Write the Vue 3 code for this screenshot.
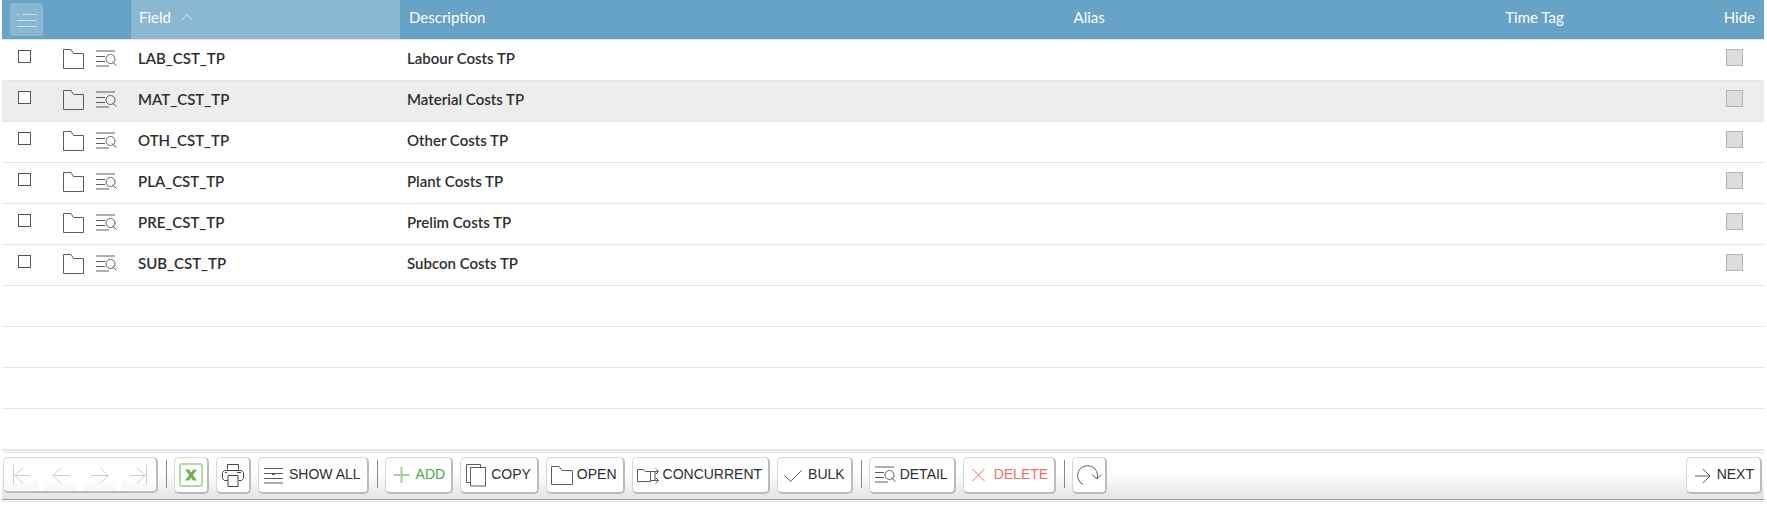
<script setup>
import { ref, reactive } from 'vue'

const rows = reactive([
  { field: 'LAB_CST_TP', description: 'Labour Costs TP', selected: false },
  { field: 'MAT_CST_TP', description: 'Material Costs TP', selected: false },
  { field: 'OTH_CST_TP', description: 'Other Costs TP', selected: false },
  { field: 'PLA_CST_TP', description: 'Plant Costs TP', selected: false },
  { field: 'PRE_CST_TP', description: 'Prelim Costs TP', selected: false },
  { field: 'SUB_CST_TP', description: 'Subcon Costs TP', selected: false },
])
const emptyRows = 4
const activeRow = ref(1)

// Icons are drawn on a 24 x 24 grid, one unit per pixel.
const icons = {
  folder: 'M1.5 21.5V2.5H9L11.5 6.5H21.5V21.5Z',
  detail: 'M1 4H20M1 9.5H10M1 14.5H10M1 19H14M17.5 15L21.5 18.5M15.5 7.5a4.5 4.5 0 1 0 .01 0Z',
  showAll: 'M1 5.5H20M1 10.5H20M1 15.5H20M1 20H20M9 11.5H12',
  add: 'M11.5 4V20M3.5 12H19.5',
  copy: 'M5.5 19.5H1.5V1.5H15.5V4.5M5.5 4.5H20.5V23H5.5Z',
  open: 'M.5 21.5V3.5H8L11 7.5H21.5V21.5Z',
  concurrent: 'M14 18.5H.5V6.5H6.5L8.5 8.5H14M13.5 8V19M14 8.5H21M14 17.5H21M18.5 5.5L21.5 8.5L18.5 11.5M18.5 14.5L21.5 17.5L18.5 20.5M18 8.5V17.5',
  bulk: 'M2.5 12.5L8.5 18.5L19.5 7.5',
  remove: 'M4.5 6L16.5 18M16.5 6L4.5 18',
  next: 'M4 13H19M12 6L19 13L12 20',
}

const editActions = [
  { label: 'ADD', icon: 'add', tone: 'green' },
  { label: 'COPY', icon: 'copy' },
  { label: 'OPEN', icon: 'open' },
  { label: 'CONCURRENT', icon: 'concurrent' },
  { label: 'BULK', icon: 'bulk' },
]
const recordActions = [
  { label: 'DETAIL', icon: 'detail' },
  { label: 'DELETE', icon: 'remove', tone: 'red' },
]
const pager = [
  { label: 'First page', path: 'M5.5 2V22M7 12.5H22M15 4.5L7 12.5L15 20.5' },
  { label: 'Previous page', path: 'M6 12.5H23M14 4.5L6 12.5L14 20.5' },
  { label: 'Next page', path: 'M5 12.5H22M14 4.5L22 12.5L14 20.5' },
  { label: 'Last page', path: 'M21.5 2V22M5 12.5H20M12 4.5L20 12.5L12 20.5' },
]
</script>

<template>
  <main class="panel">
    <table class="grid">
      <colgroup>
        <col class="c-select" /><col class="c-tools" /><col class="c-field" />
        <col /><col class="c-alias" /><col class="c-tag" /><col class="c-hide" />
      </colgroup>
      <thead>
        <tr>
          <th class="select">
            <button class="menu" aria-label="List options">
              <svg width="24" height="24" viewBox="0 0 24 24"><path d="M2 6.5H4M7 6.5H22M2 12.5H22M2 18.5H22" /></svg>
            </button>
          </th>
          <th aria-label="Row tools"></th>
          <th class="sorted" aria-sort="ascending">
            Field
            <svg class="caret" width="12" height="8" viewBox="0 0 12 8"><path d="M1 7L6 1.5L11 7" /></svg>
          </th>
          <th class="wide">Description</th>
          <th>Alias</th>
          <th>Time Tag</th>
          <th class="hide-head">Hide</th>
        </tr>
      </thead>
      <tbody>
        <tr v-for="(row, i) in rows" :key="row.field" :class="{ active: i === activeRow }">
          <td class="select">
            <input v-model="row.selected" type="checkbox" class="pick" :aria-label="`Select ${row.field}`" />
          </td>
          <td class="tools-cell">
            <div class="tools">
              <button :aria-label="`Open ${row.field}`">
                <svg width="24" height="24" viewBox="0 0 24 24"><path :d="icons.folder" /></svg>
              </button>
              <button :aria-label="`Detail of ${row.field}`">
                <svg width="24" height="24" viewBox="0 0 24 24"><path :d="icons.detail" /></svg>
              </button>
            </div>
          </td>
          <td>{{ row.field }}</td>
          <td>{{ row.description }}</td>
          <td></td>
          <td></td>
          <td class="hide-cell">
            <input type="checkbox" class="flag" disabled :aria-label="`Hide ${row.field}`" />
          </td>
        </tr>
        <tr v-for="n in emptyRows" :key="n">
          <td colspan="7"></td>
        </tr>
      </tbody>
    </table>

    <footer class="bar">
      <div class="bar-inner">
        <div class="pager">
          <button v-for="p in pager" :key="p.label" :aria-label="p.label" disabled>
            <svg width="28" height="24" viewBox="0 0 28 24"><path :d="p.path" /></svg>
          </button>
        </div>
        <span class="sep"></span>
        <button class="btn square" aria-label="Export to Excel">
          <svg class="excel" width="24" height="24" viewBox="0 0 24 24">
            <rect x="1" y="1" width="22" height="22" rx="2" />
            <path d="M6 6.5H10L18 17.5H14Z" class="fill" />
            <path d="M14.5 6.5H18L10 17.5H6Z" class="fill" />
          </svg>
        </button>
        <button class="btn square" aria-label="Print">
          <svg class="print" width="24" height="24" viewBox="0 0 24 24">
            <path d="M6.5 6.5V1.5H17.5V6.5M6.5 17.5H3.5L1.5 15.5V9.5L3.5 7.5H20.5L22.5 9.5V15.5L20.5 17.5H17.5M7 12.5H17V23.5H7ZM4 9.5H6M16 9.5H20" />
          </svg>
        </button>
        <button class="btn">
          <svg width="24" height="24" viewBox="0 0 24 24"><path :d="icons.showAll" /></svg>
          <span class="label">SHOW ALL</span>
        </button>
        <span class="sep"></span>
        <button v-for="a in editActions" :key="a.label" class="btn" :class="a.tone">
          <svg width="24" height="24" viewBox="0 0 24 24"><path :d="icons[a.icon]" /></svg>
          <span class="label">{{ a.label }}</span>
        </button>
        <span class="sep"></span>
        <button v-for="a in recordActions" :key="a.label" class="btn" :class="a.tone">
          <svg width="24" height="24" viewBox="0 0 24 24"><path :d="icons[a.icon]" /></svg>
          <span class="label">{{ a.label }}</span>
        </button>
        <span class="sep"></span>
        <button class="btn square" aria-label="Refresh">
          <svg width="26" height="24" viewBox="0 0 26 24"><path d="M7 21.5A10 10 0 1 1 21 16M16 11.5L21 16L25 11.5" /></svg>
        </button>
        <button class="btn last">
          <svg width="24" height="24" viewBox="0 0 24 24"><path :d="icons.next" /></svg>
          <span class="label">NEXT</span>
        </button>
      </div>
    </footer>
  </main>
</template>

<style>
body {
  background: #fff;
}
</style>

<style scoped>
.panel {
  margin: 0 3px 0 2px;
  font-family: Lato, "Liberation Sans", sans-serif;
  font-size: 15px;
  color: #2e2e2e;
}
svg {
  display: block;
  flex: none;
  fill: none;
  stroke: #5c5c5c;
  stroke-width: 1;
}
button {
  padding: 0;
  border: 0;
  background: none;
  font: inherit;
  color: inherit;
}
.grid {
  width: 100%;
  table-layout: fixed;
  border-collapse: separate;
  border-spacing: 0;
}
.c-select { width: 50px; }
.c-tools { width: 79px; }
.c-field { width: 269px; }
.c-alias { width: 24.5%; }
.c-tag { width: 12.3%; }
.c-hide { width: 50px; }
th {
  height: 39px;
  padding: 0 8px 5px;
  box-sizing: border-box;
  background: #67a2c7;
  color: #fff;
  font-weight: 400;
  line-height: 20px;
  text-align: left;
}
th.select {
  padding: 3px 8px;
}
th.sorted {
  background: #8ab8d3;
}
th.wide {
  padding-left: 9px;
}
th.hide-head {
  padding: 0 9px 5px 0;
  text-align: right;
}
.menu {
  display: flex;
  align-items: center;
  justify-content: center;
  width: 33px;
  height: 33px;
  border-radius: 3px;
  background: #8ab8d3;
}
.menu svg {
  stroke: #c6e0ef;
}
.caret {
  display: inline-block;
  margin-left: 6px;
  vertical-align: 2px;
  stroke: #d3e7f2;
}
td {
  height: 41px;
  padding: 0 7px 5px;
  box-sizing: border-box;
  border-top: 1px solid #e6e6e6;
  font-weight: 600;
  line-height: 20px;
}
.active td {
  background: #ededed;
}
td.select {
  padding: 0 16px 5px;
}
input {
  display: block;
  appearance: none;
  margin: 0;
  box-sizing: border-box;
}
.pick {
  width: 13px;
  height: 13px;
  margin-bottom: 3px;
  border: 1px solid #555;
  background: #fff;
}
.pick:checked {
  background: #67a2c7;
}
.flag {
  width: 17px;
  height: 17px;
  border: 1px solid #b3b3b3;
  background: #ddd;
}
td.hide-cell {
  padding: 0 0 5px 12px;
}
td.tools-cell {
  padding: 0 0 3px 10px;
}
.tools {
  display: flex;
  gap: 9px;
}
.bar {
  padding: 1px 0;
  border-top: 2px solid #e6e6e6;
  border-bottom: 1px solid #e6e6e6;
}
.bar-inner {
  display: flex;
  align-items: flex-start;
  gap: 7px;
  height: 48px;
  padding: 4px 2px 0 1px;
  box-sizing: border-box;
  border-top: 1px solid #e6e6e6;
  border-bottom: 1px solid #999;
  background: linear-gradient(#fff 40%, #e4e4e4);
  font-family: "Liberation Sans", Arial, sans-serif;
  font-size: 14px;
}
.btn,
.pager {
  display: flex;
  align-items: center;
  box-sizing: border-box;
  border: 1px solid #d6d6d6;
  border-right: 2px solid #bbb;
  border-bottom: 2px solid #bbb;
  border-radius: 5px;
  background: #fff;
}
.btn {
  gap: 2px;
  height: 37px;
  padding: 0 6px 0 4px;
  line-height: 20px;
  white-space: nowrap;
}
.label {
  padding-bottom: 2px;
}
.btn.square {
  width: 35px;
  padding: 0;
  justify-content: center;
}
.pager {
  gap: 6px;
  height: 36px;
  padding: 1px;
}
.pager button {
  display: flex;
  align-items: center;
  justify-content: center;
  width: 33px;
  height: 31px;
  background: linear-gradient(#fff 60%, #f6f6f6);
}
.pager svg {
  stroke: #ccc;
}
.sep {
  width: 1px;
  height: 28px;
  margin: 3px 0 0 1px;
  background: #888;
}
.green {
  color: #47a947;
}
.green svg {
  stroke: #9fd693;
  stroke-width: 2;
}
.red {
  color: #ef6f66;
}
.red svg {
  stroke: #ef6f66;
}
.excel {
  stroke: #b3dba0;
  stroke-width: 2;
}
.excel .fill {
  fill: #6fb544;
  stroke: none;
}
.print {
  stroke: #444;
}
.last {
  margin-left: auto;
}
</style>
